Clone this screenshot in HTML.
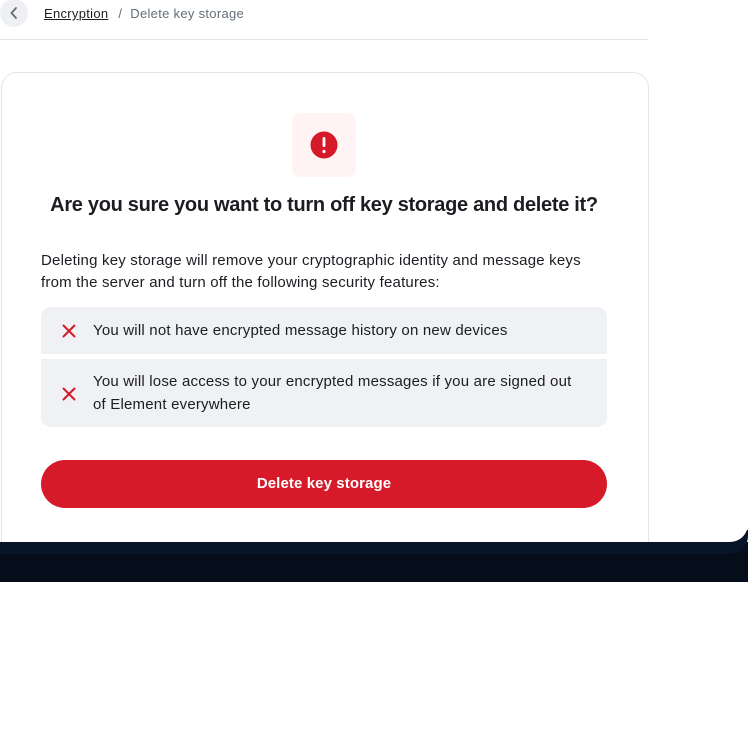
<!DOCTYPE html>
<html><head><meta charset="utf-8"><style>
*{margin:0;padding:0;box-sizing:border-box}
body{width:748px;height:729px;background:#fff;font-family:"Liberation Sans",sans-serif;position:relative;overflow:hidden;color:#1b1d22}
.dark{position:absolute;left:0;top:542px;width:748px;height:40px;background:#050d1b}
.band{position:absolute;left:0;top:530px;width:748px;height:24px;background:#081428;border-radius:0 0 18px 0}
.panel{position:absolute;left:0;top:0;width:748px;height:542px;background:#fff;border-radius:0 0 18px 0;overflow:hidden}
.back{position:absolute;left:0;top:-1px;width:28px;height:28px;border-radius:50%;background:#eef0f4}
.crumb{position:absolute;left:44px;top:6px;font-size:13px;color:#1b1d22;letter-spacing:0.3px}
.crumb u{text-decoration:underline}
.crumb span{color:#656d77;margin-left:8px}
.hr{position:absolute;left:0;top:39px;width:648px;height:1px;background:#e1e5eb}
.card{position:absolute;left:1px;top:72px;width:648px;height:500px;border:1px solid #e1e5eb;border-radius:16px}
.ic{position:absolute;left:292px;top:113px;width:64px;height:64px;background:#fff4f3;border-radius:8px}
h1{position:absolute;left:0;width:648px;top:194px;text-align:center;font-size:20px;font-weight:bold;letter-spacing:-0.3px}
p{position:absolute;left:41px;top:250px;width:562px;font-size:15px;line-height:22px;color:#1b1d22;letter-spacing:0.2px}
.item{position:absolute;left:41px;width:566px;background:#f0f1f5;font-size:15px;line-height:23px;padding-left:52px;padding-right:24px;letter-spacing:0.2px}
.x{position:absolute;left:21px}
.btn{position:absolute;left:41px;top:460px;width:566px;height:48px;border-radius:24px;background:#d61a2a;color:#fff;font-weight:bold;font-size:15px;text-align:center;line-height:48px;letter-spacing:0.1px}
</style></head><body>
<div class="dark"></div><div class="band"></div>
<div class="panel">
<div class="back"><svg width="28" height="28" viewBox="0 0 28 28"><path d="M16 9l-4.5 5 4.5 5" fill="none" stroke="#656d77" stroke-width="1.8" stroke-linecap="round" stroke-linejoin="round"/></svg></div>
<div class="crumb"><u>Encryption</u> <span style="margin-left:6px">/</span><span>Delete key storage</span></div>
<div class="hr"></div>
<div class="card"></div>
<div class="ic"><svg width="64" height="64" viewBox="0 0 64 64"><circle cx="32" cy="32" r="13.5" fill="#d51928"/><rect x="30.6" y="24" width="2.8" height="10" rx="1.4" fill="#fff"/><circle cx="32" cy="38.5" r="1.6" fill="#fff"/></svg></div>
<h1>Are you sure you want to turn off key storage and delete it?</h1>
<p>Deleting key storage will remove your cryptographic identity and message keys from the server and turn off the following security features:</p>
<div class="item" style="top:307px;height:47px;padding-top:12px;border-radius:10px 10px 0 0"><svg class="x" style="top:17px" width="14" height="14" viewBox="0 0 14 14"><path d="M1.5 1.5l11 11M12.5 1.5l-11 11" stroke="#d51928" stroke-width="2" stroke-linecap="round"/></svg>You will not have encrypted message history on new devices</div>
<div class="item" style="top:359px;height:68px;padding-top:11px;border-radius:0 0 10px 10px"><svg class="x" style="top:28px" width="14" height="14" viewBox="0 0 14 14"><path d="M1.5 1.5l11 11M12.5 1.5l-11 11" stroke="#d51928" stroke-width="2" stroke-linecap="round"/></svg>You will lose access to your encrypted messages if you are signed out of Element everywhere</div>
<div class="btn">Delete key storage</div>
</div>
</body></html>
